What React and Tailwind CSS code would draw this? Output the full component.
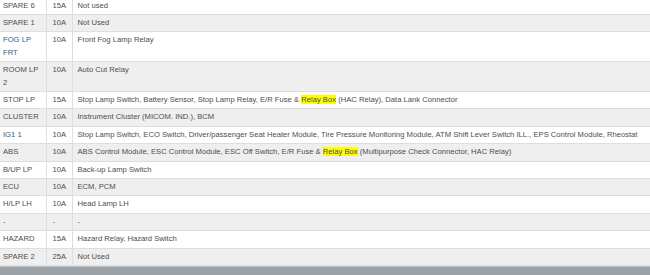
import React from "react";

const rows = [
  ["SPARE 6", "15A", "Not used"],
  ["SPARE 1", "10A", "Not Used"],
  [["FOG LP", "FRT"], "10A", "Front Fog Lamp Relay", true],
  [["ROOM LP", "2"], "10A", "Auto Cut Relay"],
  ["STOP LP", "15A", ["Stop Lamp Switch, Battery Sensor, Stop Lamp Relay, E/R Fuse & ", "(HAC Relay), Data Lank Connector"]],
  ["CLUSTER", "10A", "Instrument Cluster (MICOM. IND.), BCM"],
  ["IG1 1", "10A", "Stop Lamp Switch, ECO Switch, Driver/passenger Seat Heater Module, Tire Pressure Monitoring Module, ATM Shift Lever Switch ILL., EPS Control Module, Rheostat", true],
  ["ABS", "10A", ["ABS Control Module, ESC Control Module, ESC Off Switch, E/R Fuse & ", "(Multipurpose Check Connector, HAC Relay)"]],
  ["B/UP LP", "10A", "Back-up Lamp Switch"],
  ["ECU", "10A", "ECM, PCM"],
  ["H/LP LH", "10A", "Head Lamp LH"],
  ["-", "-", "-"],
  ["HAZARD", "15A", "Hazard Relay, Hazard Switch"],
  ["SPARE 2", "25A", "Not Used"],
];

export default function App() {
  return (
    <div className="w-[650px] h-[275px] overflow-hidden bg-white flex flex-col" style={{ fontFamily: '"Liberation Sans", Arial, sans-serif' }}>
      <div className="flex-1 overflow-hidden">
        <table className="-mt-[2.4px] w-[700px] border-collapse table-fixed text-[7.65px] leading-[12.4px] text-[#4e4e4e]">
          <colgroup>
            <col className="w-[46px]" />
            <col className="w-[26px]" />
            <col />
          </colgroup>
          <tbody>
            {rows.map((r, i) => {
              const [a, b, c, blue] = r;
              return (
                <tr key={i} className={`${i % 2 === 0 ? "bg-white" : "bg-[#efeff0]"} border-b border-[#dedede]`}>
                  <td className={`align-top py-[2px] pl-[3px] pr-[2px] border-r border-[#dedede] ${blue ? "text-[#2f5e8e]" : ""}`}>
                    {Array.isArray(a) ? (
                      <>
                        {a[0]}
                        <br />
                        {a[1]}
                      </>
                    ) : (
                      a
                    )}
                  </td>
                  <td className="align-top py-[2px] pl-[6px] border-r border-[#dedede]">{b}</td>
                  <td className="align-top py-[2px] pl-[5px] whitespace-nowrap">
                    {Array.isArray(c) ? (
                      <>
                        {c[0]}
                        <span className="bg-[#ffff00]">Relay Box</span> {c[1]}
                      </>
                    ) : (
                      c
                    )}
                  </td>
                </tr>
              );
            })}
          </tbody>
        </table>
      </div>
      <div className="h-[9px] shrink-0 bg-[#9ca1a6] border-t border-[#c3c6c9]" />
    </div>
  );
}
